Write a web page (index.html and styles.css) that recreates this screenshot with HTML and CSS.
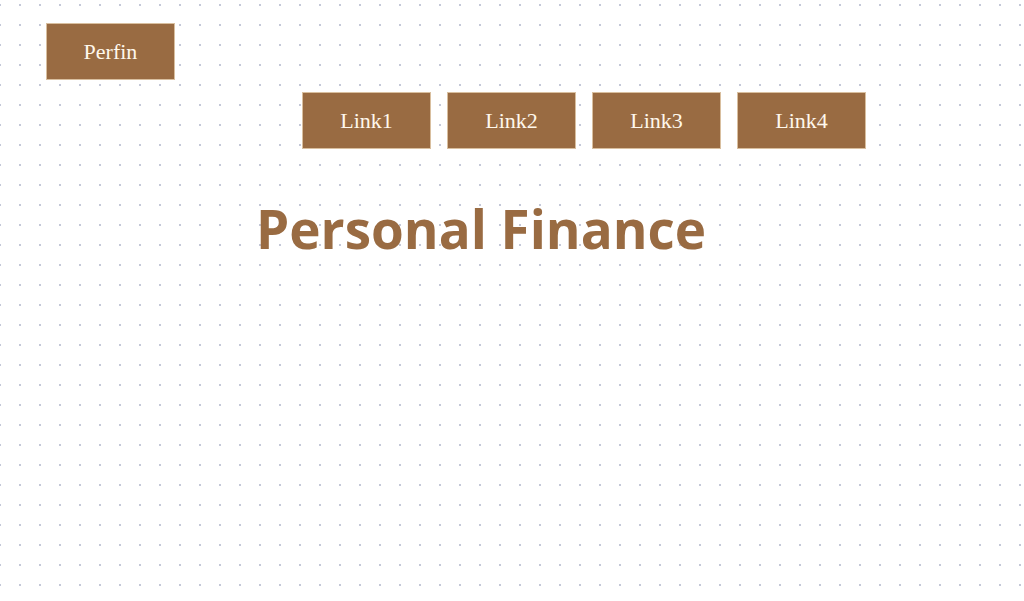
FILE: index.html
```html
<!DOCTYPE html>
<html lang="en">
<head>
<meta charset="utf-8">
<title>Perfin</title>
<link rel="stylesheet" href="styles.css">
</head>
<body>
<header class="header">
  <a class="btn logo" href="#">Perfin</a>
  <nav class="nav">
    <a class="btn" href="#">Link1</a>
    <a class="btn" href="#">Link2</a>
    <a class="btn" href="#">Link3</a>
    <a class="btn" href="#">Link4</a>
  </nav>
</header>
<main class="main">
  <h1 class="title">Personal Finance</h1>
</main>
</body>
</html>
```

FILE: styles.css
```css
html, body {
  margin: 0;
  padding: 0;
  height: 100%;
}
body {
  background-color: #ffffff;
  background-image: radial-gradient(circle, #c4c8d8 1px, transparent 1.2px);
  background-size: 20px 20px;
  background-position: -10px -5px;
  font-family: "Liberation Serif", serif;
}
.header {
  display: flex;
  flex-direction: column;
  padding: 23px 0 0 46px;
}
.btn {
  display: flex;
  align-items: center;
  justify-content: center;
  width: 129px;
  height: 57px;
  padding-top: 1px;
  box-sizing: border-box;
  background: #996b42;
  border: 1px solid #d9bf9f;
  color: #fff8ec;
  font-size: 22px;
  text-decoration: none;
}
.nav {
  display: flex;
  gap: 16px;
  margin: 12px 0 0 256px;
}
.main {
  padding-left: 256px;
}
.title {
  margin: 44px 0 0 0;
  font-family: "Open Sans", sans-serif;
  font-weight: 700;
  font-size: 53px;
  line-height: 72px;
  color: #996b42;
}
```
